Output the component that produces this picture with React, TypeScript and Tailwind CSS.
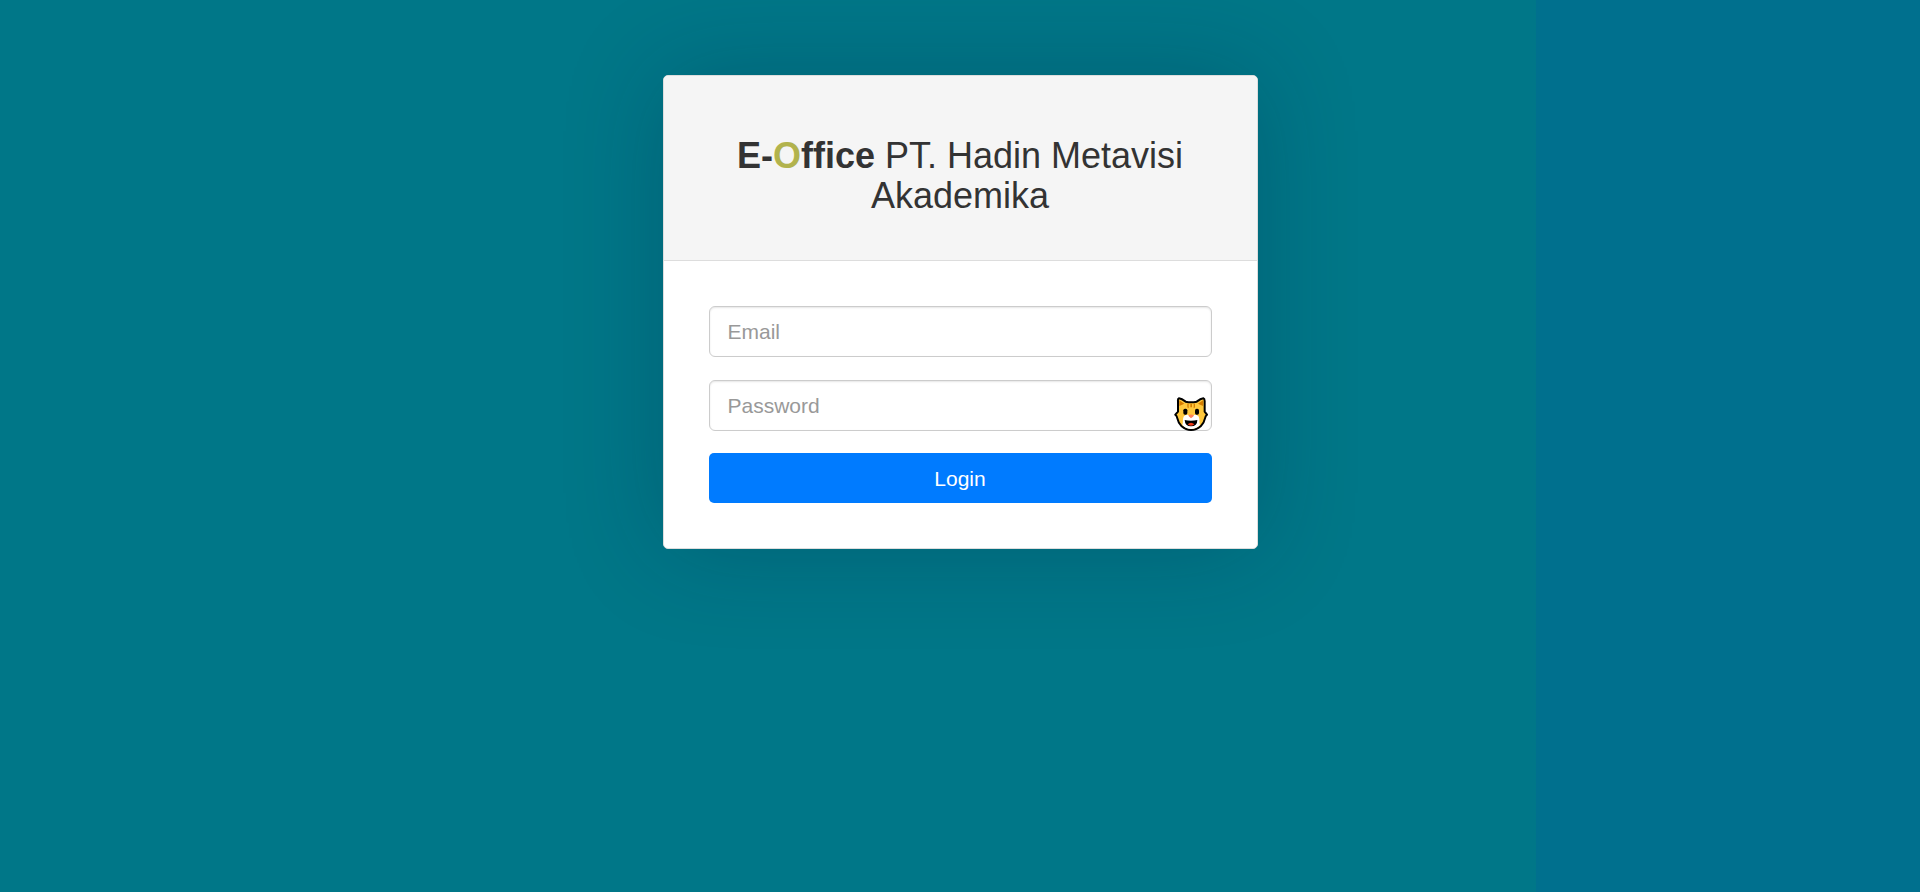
import React from "react";

function CatIcon() {
  return (
    <svg viewBox="0 0 102 102" className="h-[34px] w-[34px]" aria-hidden="true">
      <path
        d="M15 4 Q23 5 35 14 Q51 18 68 14 Q80 5 88 4 Q92 5 92 12 L92 44 L99 53 Q94 57 94 61 Q91 76 80 88 Q67 99 51 99 Q36 99 23 88 Q12 76 9 61 Q9 57 4 53 L12 44 L12 12 Q11 5 15 4 Z"
        fill="#ffc83d"
        stroke="#000"
        strokeWidth="6"
        strokeLinejoin="round"
      />
      <path d="M16 10 L31 20 L16 27 Z" fill="#d67d00" />
      <path d="M87 10 L72 20 L87 27 Z" fill="#d67d00" />
      <path d="M40 20 H44 V34 Q40 33 40 29 Z M49 20 H54 V31 H49 Z M59 20 H63 V29 Q63 33 59 34 Z" fill="#d67d00" />
      <path
        d="M51 60 Q59 51 68 54 Q76 57 76 66 Q76 78 78 84 Q67 96 51 96 Q36 96 25 84 Q27 78 27 66 Q27 57 35 54 Q44 51 51 60 Z"
        fill="#fff"
      />
      <path d="M43 54 Q51 51 60 54 Q60 58 51 64 Q43 58 43 54 Z" fill="#ff8257" />
      <path d="M32 69 Q51 74 70 69 Q70 88 51 88 Q33 88 32 69 Z" fill="#000" />
      <path d="M41 82 Q51 73 61 82 Q58 86 51 86 Q44 86 41 82 Z" fill="#f03a17" />
      <rect x="28" y="35" width="12" height="18" rx="5" fill="#000" />
      <rect x="63" y="35" width="12" height="18" rx="5" fill="#000" />
    </svg>
  );
}

const fieldClass =
  "block h-[51px] w-full rounded-md border border-[#ccc] bg-white px-[18px] text-[21px] text-[#555] shadow-[inset_0_1px_2px_rgba(0,0,0,0.1)] outline-none placeholder:text-[#999]";

export default function App() {
  return (
    <main className="flex min-h-screen items-start justify-center bg-[linear-gradient(to_right,#007788_80%,#00708e_80%)] pt-[75px] pb-10 font-['Liberation_Sans',Arial,sans-serif]">
      <section className="w-full max-w-[595px] rounded-[5px] border border-[#ddd] bg-white shadow-[0_0_100px_rgba(0,30,60,0.24)]">
        <header className="rounded-t border-b border-[#ddd] bg-[#f5f5f5] px-[45px] pt-[60px] pb-11">
          <h1 className="text-center text-4xl text-[#333]">
            <b>
              E-<span className="text-[#b2b34d]">O</span>ffice
            </b>{" "}
            PT. Hadin Metavisi Akademika
          </h1>
        </header>
        <form className="p-[45px]" onSubmit={(event) => event.preventDefault()}>
          <div className="flex flex-col gap-[23px]">
            <input type="email" aria-label="Email" placeholder="Email" className={fieldClass} />
            <div className="relative">
              <input type="password" aria-label="Password" placeholder="Password" className={fieldClass} />
              <button type="button" aria-label="Show password" className="absolute right-1 bottom-0">
                <CatIcon />
              </button>
            </div>
          </div>
          <button
            type="submit"
            className="mt-[22px] block h-[50px] w-full rounded-[5px] bg-[#007bff] pt-0.5 text-[21px] text-white"
          >
            Login
          </button>
        </form>
      </section>
    </main>
  );
}
